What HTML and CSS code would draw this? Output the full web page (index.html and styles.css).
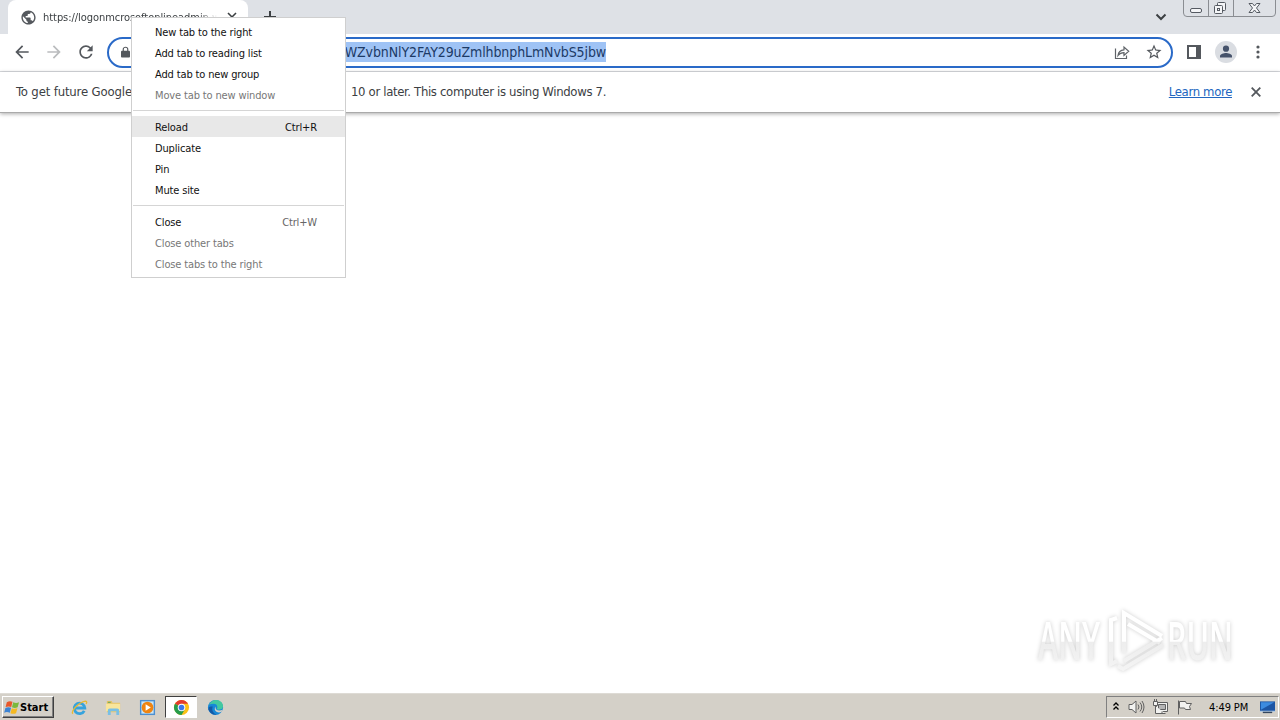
FILE: index.html
```html
<!DOCTYPE html>
<html lang="en">
<head>
<meta charset="utf-8">
<title>New tab</title>
<link rel="stylesheet" href="styles.css">
</head>
<body>
<div class="screen">
  <header class="tabstrip">
    <div class="tab">
      <svg class="globe" viewBox="0 0 24 24"><path d="M12 2C6.48 2 2 6.48 2 12s4.48 10 10 10 10-4.48 10-10S17.52 2 12 2zm-1 17.93c-3.95-.49-7-3.85-7-7.93 0-.62.08-1.21.21-1.79L9 15v1c0 1.1.9 2 2 2v1.93zm6.9-2.54c-.26-.81-1-1.39-1.9-1.39h-1v-3c0-.55-.45-1-1-1H8v-2h2c.55 0 1-.45 1-1V7h2c1.1 0 2-.9 2-2v-.41c2.93 1.19 5 4.06 5 7.41 0 2.08-.8 3.97-2.1 5.39z"/></svg>
      <span class="tab-title">https://logonmcrosoftonlineadmin.w</span>
      <svg class="tab-close" viewBox="0 0 10 10"><path d="M1 1l8 8M9 1L1 9"/></svg>
    </div>
    <svg class="new-tab" viewBox="0 0 12 12"><path d="M6 0v12M0 6h12"/></svg>
    <svg class="tab-search" viewBox="0 0 12 8"><path d="M1.500 1.500L6 6l4.500-4.500"/></svg>
    <svg class="caption" viewBox="0 0 94 18">
      <path class="cap-frame" d="M.5 0v13q0 3.500 3.500 3.500h85q3.500 0 3.500-3.500V0M25.500 0v16M50.500 0v16"/>
      <rect class="cap-glyph" x="7.500" y="8.500" width="11" height="4" rx="1.500"/>
      <rect class="cap-glyph" x="34.500" y="2.500" width="8" height="8" rx="1"/>
      <rect class="cap-glyph" x="31.500" y="5.500" width="8" height="8" rx="1"/>
      <rect class="cap-glyph" x="34.500" y="8.500" width="2" height="2"/>
      <path class="cap-glyph" d="M66 3.500h3.500l2 2.500 2-2.500H77l-3.500 4.500 3.500 4.500h-3.500l-2-2.500-2 2.500H66l3.500-4.500z"/>
    </svg>
  </header>

  <div class="toolbar">
    <svg class="nav" viewBox="0 0 24 24"><path d="M20 11H7.830l5.590-5.590L12 4l-8 8 8 8 1.410-1.410L7.830 13H20v-2z"/></svg>
    <svg class="nav off" viewBox="0 0 24 24"><path d="M4 11h12.170l-5.590-5.590L12 4l8 8-8 8-1.410-1.410L16.170 13H4v-2z"/></svg>
    <svg class="nav" viewBox="0 0 24 24"><path d="M17.650 6.350A7.958 7.958 0 0 0 12 4c-4.420 0-7.990 3.580-8 8s3.570 8 8 8c3.730 0 6.840-2.550 7.730-6h-2.080A5.990 5.990 0 0 1 12 18c-3.310 0-6-2.690-6-6s2.690-6 6-6c1.660 0 3.140.69 4.220 1.780L13 11h7V4l-2.350 2.350z"/></svg>
    <div class="omnibox">
      <svg class="lock" viewBox="0 0 10 12"><path d="M1 4.500h8q1 0 1 1V11q0 1-1 1H1q-1 0-1-1V5.500q0-1 1-1z"/><path class="shackle" d="M2.500 5V3a2.500 2.300 0 0 1 5 0v2"/></svg>
      <div class="url"><span class="selected">WZvbnNlY2FAY29uZmlhbnphLmNvbS5jbw</span></div>
      <svg class="share" viewBox="0 0 16 16"><path d="M1.500 4.500v10h11v-3M4 11.500c.5-4 2.500-5.500 6-5.700V3l4.700 4.300L10 11.500V8.700C7.500 8.700 5.500 9.500 4 11.500z"/></svg>
      <svg class="star" viewBox="0 0 24 24"><path d="M22 9.240l-7.190-.62L12 2 9.190 8.630 2 9.240l5.460 4.730L5.820 21 12 17.270 18.180 21l-1.630-7.030L22 9.240zM12 15.400l-3.760 2.270 1-4.280-3.320-2.880 4.380-.38L12 6.100l1.710 4.040 4.380.38-3.320 2.880 1 4.280L12 15.400z"/></svg>
    </div>
    <svg class="panel" viewBox="0 0 14 14"><path d="M0 0h14v14H0zM2 2v10h7V2z" fill-rule="evenodd"/></svg>
    <svg class="avatar" viewBox="0 0 22 22"><circle class="avatar-bg" cx="11" cy="11" r="11"/><circle cx="11" cy="7.700" r="3.100"/><path d="M5 16.500v-1.500c0-2 4-3 6-3s6 1 6 3v1.500z"/></svg>
    <svg class="dots" viewBox="0 0 4 14"><circle cx="2" cy="2" r="1.600"/><circle cx="2" cy="7" r="1.600"/><circle cx="2" cy="12" r="1.600"/></svg>
  </div>

  <div class="infobar">
    <span class="info-start">To get future Google</span>
    <span class="info-end">10 or later. This computer is using Windows 7.</span>
    <a class="learn">Learn more</a>
    <svg class="info-close" viewBox="0 0 10 10"><path d="M.7.700l8.600 8.600M9.300.700L.7 9.300"/></svg>
  </div>

  <main class="page">
    <svg class="watermark" viewBox="0 0 200 66">
      <defs>
        <linearGradient id="tone" x1="0" y1="0" x2="0" y2="66" gradientUnits="userSpaceOnUse">
          <stop offset="0" stop-color="#fff"/><stop offset=".52" stop-color="#fff"/><stop offset=".53" stop-color="#ededed"/><stop offset="1" stop-color="#f5f5f5"/>
        </linearGradient>
      </defs>
      <g class="mark-text">
        <text x="2" y="53" textLength="62" lengthAdjust="spacingAndGlyphs">ANY</text>
        <text x="131" y="53" textLength="66" lengthAdjust="spacingAndGlyphs">RUN</text>
      </g>
      <path class="mark-line" d="M81 11l-6 2v44l6-3M88 46V6l38 23M92 17l32 19M88 54l38-23M82 59l5 3 40-24"/>
    </svg>
  </main>

  <footer class="taskbar">
    <div class="start">
      <svg class="flag" viewBox="0 0 17 15"><path fill="#e8572a" d="M3 2q3-2 6-.5L7.700 7Q5 5.800 1.700 7z"/><path fill="#7bb83b" d="M9.800 2q3 1.500 6.200 0L14.500 7.300q-3 1.200-6 0z"/><path fill="#3c83d3" d="M1.500 8q3-1.500 6-.2L6.200 13Q3 11.700.2 13z"/><path fill="#f5b921" d="M8.300 8.300q3 1.200 6 .1l-1.500 5.200q-3 1.200-6 0z"/></svg>
      <span>Start</span>
    </div>
    <div class="apps">
      <div class="app"><svg viewBox="0 0 18 18"><path fill="none" stroke="#36a3dd" stroke-width="3" d="M14 12.500A5.600 5.600 0 1 1 14.600 9.500H4"/><path fill="none" stroke="#e8b933" stroke-width="1.400" d="M2 15.500C-1 13 9 3 15.500 2.300q2 .3.500 3"/></svg></div>
      <div class="app"><svg viewBox="0 0 18 18"><path fill="#e6c263" d="M2 2h5l1 2h8v10H2z"/><path fill="#f8e59c" d="M1 5h15v8H1z"/><path fill="#79bfe5" d="M3 17v-5q0-2 2-2h8q2 0 2 2v5h-3v-4H6v4z"/><path fill="#5aa85d" d="M3 3h3v1H3z"/></svg></div>
      <div class="app"><svg viewBox="0 0 18 18"><path fill="#4c8fd0" d="M1 1h16v16H1z"/><path fill="#cae6f6" d="M2.500 2.500h13v13h-13z"/><circle cx="9" cy="9" r="6.200" fill="#ef8411"/><path fill="#fff" d="M7 5.500l5.500 3.500L7 12.500z"/></svg></div>
      <div class="app active"><svg viewBox="0 0 18 18"><circle cx="9" cy="9" r="8" fill="#fbc116"/><path fill="#e33b2e" d="M9 9L2.100 5A8 8 0 0 1 15.900 5H9z"/><path fill="#269c4b" d="M9 9L2.100 5A8 8 0 0 0 9 17l3.500-6z"/><circle cx="9" cy="9" r="4" fill="#fff"/><circle cx="9" cy="9" r="3" fill="#3c78e8"/></svg></div>
      <div class="app"><svg viewBox="0 0 18 18"><circle cx="9" cy="9" r="8" fill="#1787d6"/><path fill="#43c8a0" d="M2 6Q5 1 9.500 1 17 1.500 17 8q-.5 3.500-5 3.500-2.500-.5-1-2.500 0-4-4-4-3 0-5 1z"/><path fill="#1459a6" d="M6 8q-2 6 4 8.800Q4 17 1.500 11.500 1 7 6 8z"/><path fill="#d4d0c8" d="M9 8q-.5 5 6 4l1.500-.5-1 2q-3 1.500-5.500 0Q7 11.500 9 8z"/></svg></div>
    </div>
    <div class="tray">
      <svg class="chev" viewBox="0 0 6 8"><path d="M.5 3.500L3 1l2.500 2.500M.5 7.500L3 5l2.500 2.500"/></svg>
      <svg class="ticon" viewBox="0 0 17 16"><path class="fillw" d="M1 5.500h3L8 2v12l-4-3.500H1z"/><path d="M10 5.500q2 2.500 0 5M12 3.500q3.500 4.500 0 9M14 2q4 6 0 12"/></svg>
      <svg class="ticon" viewBox="0 0 17 16"><path class="fillw" d="M4.500 3.500h11v9h-11z"/><path class="scr" d="M6.500 5.500h7v5h-7z"/><path class="fillw" d="M1.500 2.500h4v4h-4zM3.500 7v7.500h10M10 12.500v2M2.500 2.500V0M4.500 2.500V0"/></svg>
      <svg class="ticon" viewBox="0 0 17 16"><path class="fillw" d="M2.500 1.500v14M3.500 2.500h6l1 2h5l-2 3 1 3H9.500l-1-1.500h-5z"/></svg>
      <span class="clock">4:49 PM</span>
      <svg class="desk" viewBox="0 0 16 13"><path fill="#1c55a4" d="M0 0h16v11H0z"/><path fill="#3c8be0" d="M1 1h14L1 9z"/><path fill="#d7e7f4" d="M0 10h16v1H0z"/><path fill="#33465e" d="M3 11h10v1.500H3z"/></svg>
    </div>
  </footer>

  <div class="menu">
    <div class="item"><span>New tab to the right</span></div>
    <div class="item"><span>Add tab to reading list</span></div>
    <div class="item"><span>Add tab to new group</span></div>
    <div class="item dim"><span>Move tab to new window</span></div>
    <div class="sep"></div>
    <div class="item hot"><span>Reload</span><span>Ctrl+R</span></div>
    <div class="item"><span>Duplicate</span></div>
    <div class="item"><span>Pin</span></div>
    <div class="item"><span>Mute site</span></div>
    <div class="sep"></div>
    <div class="item"><span>Close</span><span class="key">Ctrl+W</span></div>
    <div class="item dim"><span>Close other tabs</span></div>
    <div class="item dim"><span>Close tabs to the right</span></div>
  </div>
</div>
</body>
</html>
```
FILE: styles.css
```css
* { box-sizing: border-box; }
body { margin: 0; font-family: "DejaVu Sans Condensed", "DejaVu Sans", sans-serif; font-stretch: condensed; font-size: 11px; color: #111; }
svg { display: block; flex: none; }
.screen { position: relative; display: flex; flex-direction: column; width: 1280px; height: 720px; overflow: hidden; background: #fff; }

.tabstrip { display: flex; height: 34px; background: #dee1e6; align-items: flex-start; }
.tab { display: flex; align-items: center; width: 240px; height: 34px; margin-left: 8px; padding: 0 11px 0 12px; background: #fff; border-radius: 8px 8px 0 0; }
.globe { width: 17px; height: 17px; fill: #54585d; }
.tab-title { width: 174px; margin-left: 6px; overflow: hidden; white-space: nowrap; letter-spacing: -.05px; color: #3c4043; -webkit-mask-image: linear-gradient(90deg, #000 155px, transparent 174px); mask-image: linear-gradient(90deg, #000 155px, transparent 174px); }
.tab-close { width: 10px; height: 10px; margin-left: 10px; fill: none; stroke: #3c4043; stroke-width: 1.6; }
.new-tab { width: 12px; height: 12px; margin: 11px 0 0 16px; fill: none; stroke: #3c4043; stroke-width: 2; }
.tab-search { width: 12px; height: 8px; margin: 13px 0 0 auto; fill: none; stroke: #3c4043; stroke-width: 2; }
.caption { width: 94px; height: 18px; margin: 0 3px 0 16px; }
.cap-frame { fill: none; stroke: #8a8d92; }
.cap-glyph { fill: #f4f5f7; stroke: #555a62; }

.toolbar { display: flex; align-items: center; height: 38px; padding: 0 0 1px 12px; border-bottom: 1px solid #dadce0; }
.nav { width: 20px; height: 20px; margin-right: 12px; fill: #54585d; }
.nav.off { fill: #babcbe; }
.omnibox { display: flex; align-items: center; width: 1066px; height: 31px; margin: 1px 0 0 -1px; padding: 0 8px 1px 12px; border: 2px solid #2a6ac8; border-radius: 16px; }
.lock { width: 9px; height: 12px; fill: #54585d; }
.lock .shackle { fill: none; stroke: #54585d; stroke-width: 1.3; }
.url { display: flex; justify-content: flex-end; width: 476px; font-size: 14px; white-space: nowrap; }
.selected { height: 20px; line-height: 21px; background: #9fc3f5; color: #1c3a66; letter-spacing: -.1px; }
.share { width: 16px; height: 16px; margin-left: auto; fill: none; stroke: #5f6368; stroke-width: 1.2; }
.star { width: 18px; height: 18px; margin-left: 15px; fill: #54585d; }
.panel { width: 14px; height: 14px; margin-left: 14px; fill: #54585d; }
.avatar { width: 22px; height: 22px; margin-left: 14px; fill: #46536b; }
.avatar-bg { fill: #dadde2; }
.dots { width: 4px; height: 14px; margin-left: 19px; fill: #54585d; }

.infobar { display: flex; align-items: center; height: 41px; padding: 0 19px 1px 16px; border-bottom: 1px solid #aaa; font-size: 13px; color: #3c4043; white-space: nowrap; letter-spacing: -.34px; box-shadow: 0 1px 4px #0005; }
.info-start { width: 335px; letter-spacing: -.15px; }
.learn { margin-left: auto; color: #2266c0; text-decoration: underline; }
.info-close { width: 10px; height: 10px; margin-left: 19px; fill: none; stroke: #54585d; stroke-width: 1.8; }

.page { display: flex; flex: 1; align-items: flex-end; justify-content: flex-end; padding: 0 44px 20px 0; }
.watermark { width: 200px; height: 66px; overflow: visible; filter: drop-shadow(0 0 2px #0003); }
.mark-text { font: 600 52px "Open Sans", sans-serif; fill: url(#tone); }
.mark-line { fill: none; stroke: url(#tone); stroke-width: 4; }

.taskbar { display: flex; align-items: center; height: 27px; padding: 1px 1px 1px 2px; background: #d4d0c8; border-top: 1px solid #dedbd5; }
.start { display: flex; align-items: center; width: 52px; height: 22px; padding-left: 1px; border: 1px solid; border-color: #fff #404040 #404040 #fff; box-shadow: inset -1px -1px #808080; font-weight: bold; color: #000; }
.flag { width: 16px; height: 15px; }
.apps { display: flex; align-items: center; gap: 2px; margin-left: 9px; }
.app { display: flex; align-items: center; justify-content: center; width: 32px; height: 22px; }
.app svg { width: 17px; height: 17px; }
.app.active { background: #fff; border: 1px solid; border-color: #404040 #fff #fff #404040; }
.tray { display: flex; align-items: center; width: 173px; height: 22px; margin-left: auto; padding-left: 6px; border: 1px solid; border-color: #808080 #fff #fff #808080; }
.chev { width: 6px; height: 8px; margin: 0 9px 3px 0; fill: none; stroke: #000; stroke-width: 1.3; }
.ticon { width: 17px; height: 16px; margin-right: 7px; fill: none; stroke: #606060; }
.fillw { fill: #f2f2f0; }
.scr { fill: #b5b5b5; }
.clock { margin-left: 9px; color: #000; white-space: nowrap; width: 40px; letter-spacing: -.1px; }
.desk { width: 15px; height: 13px; margin-left: 11px; }

.menu { position: absolute; z-index: 2; left: 131px; top: 17px; width: 215px; height: 261px; padding-top: 3px; background: #fff; border: 1px solid #cfcfcf; white-space: nowrap; letter-spacing: -.14px; }
.item { display: flex; align-items: center; justify-content: space-between; height: 21px; padding: 1px 28px 0 23px; color: #111; }
.item.dim { color: #777; }
.item.hot { background: #e8e8e8; }
.key { color: #666; }
.sep { height: 11px; padding: 5px 1px; }
.sep::before { content: ""; display: block; height: 1px; background: #d5d5d5; }
```
